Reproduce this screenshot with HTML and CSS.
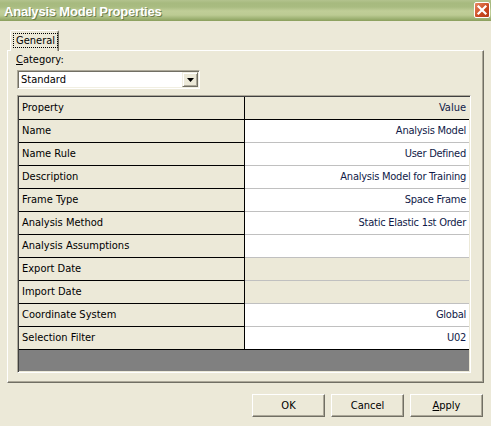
FILE: index.html
```html
<!DOCTYPE html>
<html>
<head>
<meta charset="utf-8">
<link rel="stylesheet" href="styles.css">
</head>
<body>
<div class="window">
  <div class="titlebar">
    <span class="title">Analysis Model Properties</span>
    <span class="close"><svg width="16" height="16" viewBox="0 0 16 16"><path d="M4.5 4.5 L11.5 11.5 M11.5 4.5 L4.5 11.5" stroke="#fff" stroke-width="2.2" stroke-linecap="square"/></svg></span>
  </div>
  <div class="tabs">
    <div class="tab"><span class="focus">General</span></div>
  </div>
  <div class="panel">
    <div class="label"><u>C</u>ategory:</div>
    <div class="combo">
      <span class="combo-text">Standard</span>
      <span class="combo-btn"><svg width="7" height="4" viewBox="0 0 7 4"><path d="M0 0 H7 L3.5 4 Z" fill="#000"/></svg></span>
    </div>
    <div class="grid">
      <div class="cell key head">Property</div><div class="cell val head">Value</div>
      <div class="cell key">Name</div><div class="cell val">Analysis Model</div>
      <div class="cell key">Name Rule</div><div class="cell val">User Defined</div>
      <div class="cell key">Description</div><div class="cell val">Analysis Model for Training</div>
      <div class="cell key">Frame Type</div><div class="cell val">Space Frame</div>
      <div class="cell key">Analysis Method</div><div class="cell val">Static Elastic 1st Order</div>
      <div class="cell key">Analysis Assumptions</div><div class="cell val"></div>
      <div class="cell key">Export Date</div><div class="cell val ro"></div>
      <div class="cell key">Import Date</div><div class="cell val ro"></div>
      <div class="cell key">Coordinate System</div><div class="cell val">Global</div>
      <div class="cell key last">Selection Filter</div><div class="cell val last">U02</div>
      <div class="empty"></div>
    </div>
  </div>
  <div class="buttons">
    <button class="btn">OK</button>
    <button class="btn">Cancel</button>
    <button class="btn"><u>A</u>pply</button>
  </div>
</div>
</body>
</html>
```
FILE: styles.css
```css
* { box-sizing: border-box; }
html, body { margin: 0; padding: 0; }
body {
  width: 491px;
  height: 426px;
  background: #ECE9D8;
  font-family: "DejaVu Sans Condensed", "DejaVu Sans", sans-serif;
  font-size: 11px;
  color: #000;
  overflow: hidden;
}
.window { width: 491px; height: 426px; }
.titlebar {
  height: 21px;
  background: linear-gradient(to bottom, #B3C38E 0px, #A7BA7F 3px, #A9BC81 7px, #C0CE98 11px, #BCCB93 15px, #A3B679 18px, #93A766 20px, #8A9E5C 21px);
  display: flex;
  align-items: center;
  justify-content: space-between;
  padding: 0 1px 0 4px;
}
.title {
  color: #fff;
  font-family: "Liberation Sans", Arial, sans-serif;
  font-weight: bold;
  font-size: 13px;
  letter-spacing: -0.2px;
  text-shadow: 1px 1px 0 #6E7F4C;
  margin-top: 1px;
}
.close {
  width: 16px;
  height: 16px;
  border: 1px solid #fff;
  border-radius: 2px;
  background: linear-gradient(to bottom right, #E88A64, #C9471E 60%, #B63B16);
  display: flex;
  margin-top: -2px;
}
.close svg { display: block; margin: -1px; }
.tabs {
  padding: 9px 0 0 10px;
  display: flex;
  position: relative;
  z-index: 2;
}
.tab {
  width: 49px;
  height: 21px;
  margin-bottom: -1px;
  background: #ECE9D8;
  border-left: 1px solid #fff;
  border-top: 1px solid #fff;
  border-right: 1px solid #716F64;
  box-shadow: inset -1px 0 0 #ACA899;
  border-radius: 2px 2px 0 0;
  padding: 2px 0 0 2px;
}
.focus {
  display: inline-block;
  border: 1px dotted #000;
  padding: 0 2px 0 2px;
  height: 15px;
  line-height: 13px;
  font-size: 11px;
}
.panel {
  margin: 0 7px 0 7px;
  height: 333px;
  border-left: 1px solid #fff;
  border-top: 1px solid #fff;
  border-right: 1px solid #716F64;
  border-bottom: 1px solid #716F64;
  box-shadow: inset -1px -1px 0 #ACA899;
  padding: 2px 0 0 8px;
  display: flex;
  flex-direction: column;
}
.label { height: 14px; line-height: 14px; }
.label u { text-decoration: underline; }
.combo {
  margin: 3px 0 0 1px;
  width: 183px;
  height: 19px;
  background: #fff;
  border-top: 1px solid #ACA899;
  border-left: 1px solid #ACA899;
  border-right: 1px solid #fff;
  border-bottom: 1px solid #fff;
  box-shadow: inset 1px 1px 0 #716F64, inset -1px -1px 0 #F1EFE2;
  display: flex;
  align-items: center;
  justify-content: space-between;
  padding: 1px 1px 1px 3px;
}
.combo-text { line-height: 15px; }
.combo-btn {
  width: 16px;
  height: 15px;
  background: #ECE9D8;
  border-left: 1px solid #F1EFE2;
  border-top: 1px solid #F1EFE2;
  border-right: 1px solid #716F64;
  border-bottom: 1px solid #716F64;
  box-shadow: inset 1px 1px 0 #fff, inset -1px -1px 0 #ACA899;
  display: flex;
  align-items: center;
  justify-content: center;
  padding-top: 1px;
}
.combo-btn svg { display: block; }
.grid {
  margin: 6px 0 0 1px;
  width: 454px;
  height: 278px;
  display: grid;
  grid-template-columns: 226px 224px;
  grid-template-rows: repeat(11, 23px) 1fr;
  border-top: 1px solid #ACA899;
  border-left: 1px solid #ACA899;
  border-right: 1px solid #fff;
  border-bottom: 1px solid #fff;
  box-shadow: inset 1px 1px 0 #404040, inset -1px -1px 0 #ECE9D8;
  padding: 1px 1px 1px 1px;
  background: #808080;
}
.cell {
  line-height: 22px;
  white-space: nowrap;
  overflow: hidden;
}
.key {
  background: #ECE9D8;
  border-right: 1px solid #000;
  border-bottom: 1px solid #000;
  padding-left: 3px;
}
.val {
  background: #fff;
  border-bottom: 1px solid #C0C0C0;
  text-align: right;
  padding-right: 3px;
  color: #101A48;
  letter-spacing: -0.25px;
}
.val.head { background: #ECE9D8; border-bottom-color: #000; color: #101A48; letter-spacing: 0; }
.val.ro { background: #ECE9D8; }
.val.last, .key.last { border-bottom-color: #000; }
.empty { grid-column: 1 / 3; background: #808080; }
.buttons {
  display: flex;
  justify-content: flex-end;
  gap: 6px;
  padding: 11px 8px 0 0;
}
.btn {
  width: 73px;
  height: 23px;
  font-family: "DejaVu Sans Condensed", "DejaVu Sans", sans-serif;
  font-size: 11px;
  color: #000;
  background: #ECE9D8;
  border-top: 1px solid #fff;
  border-left: 1px solid #fff;
  border-right: 1px solid #716F64;
  border-bottom: 1px solid #716F64;
  box-shadow: inset -1px -1px 0 #ACA899;
  padding: 0;
  margin: 0;
}
```
